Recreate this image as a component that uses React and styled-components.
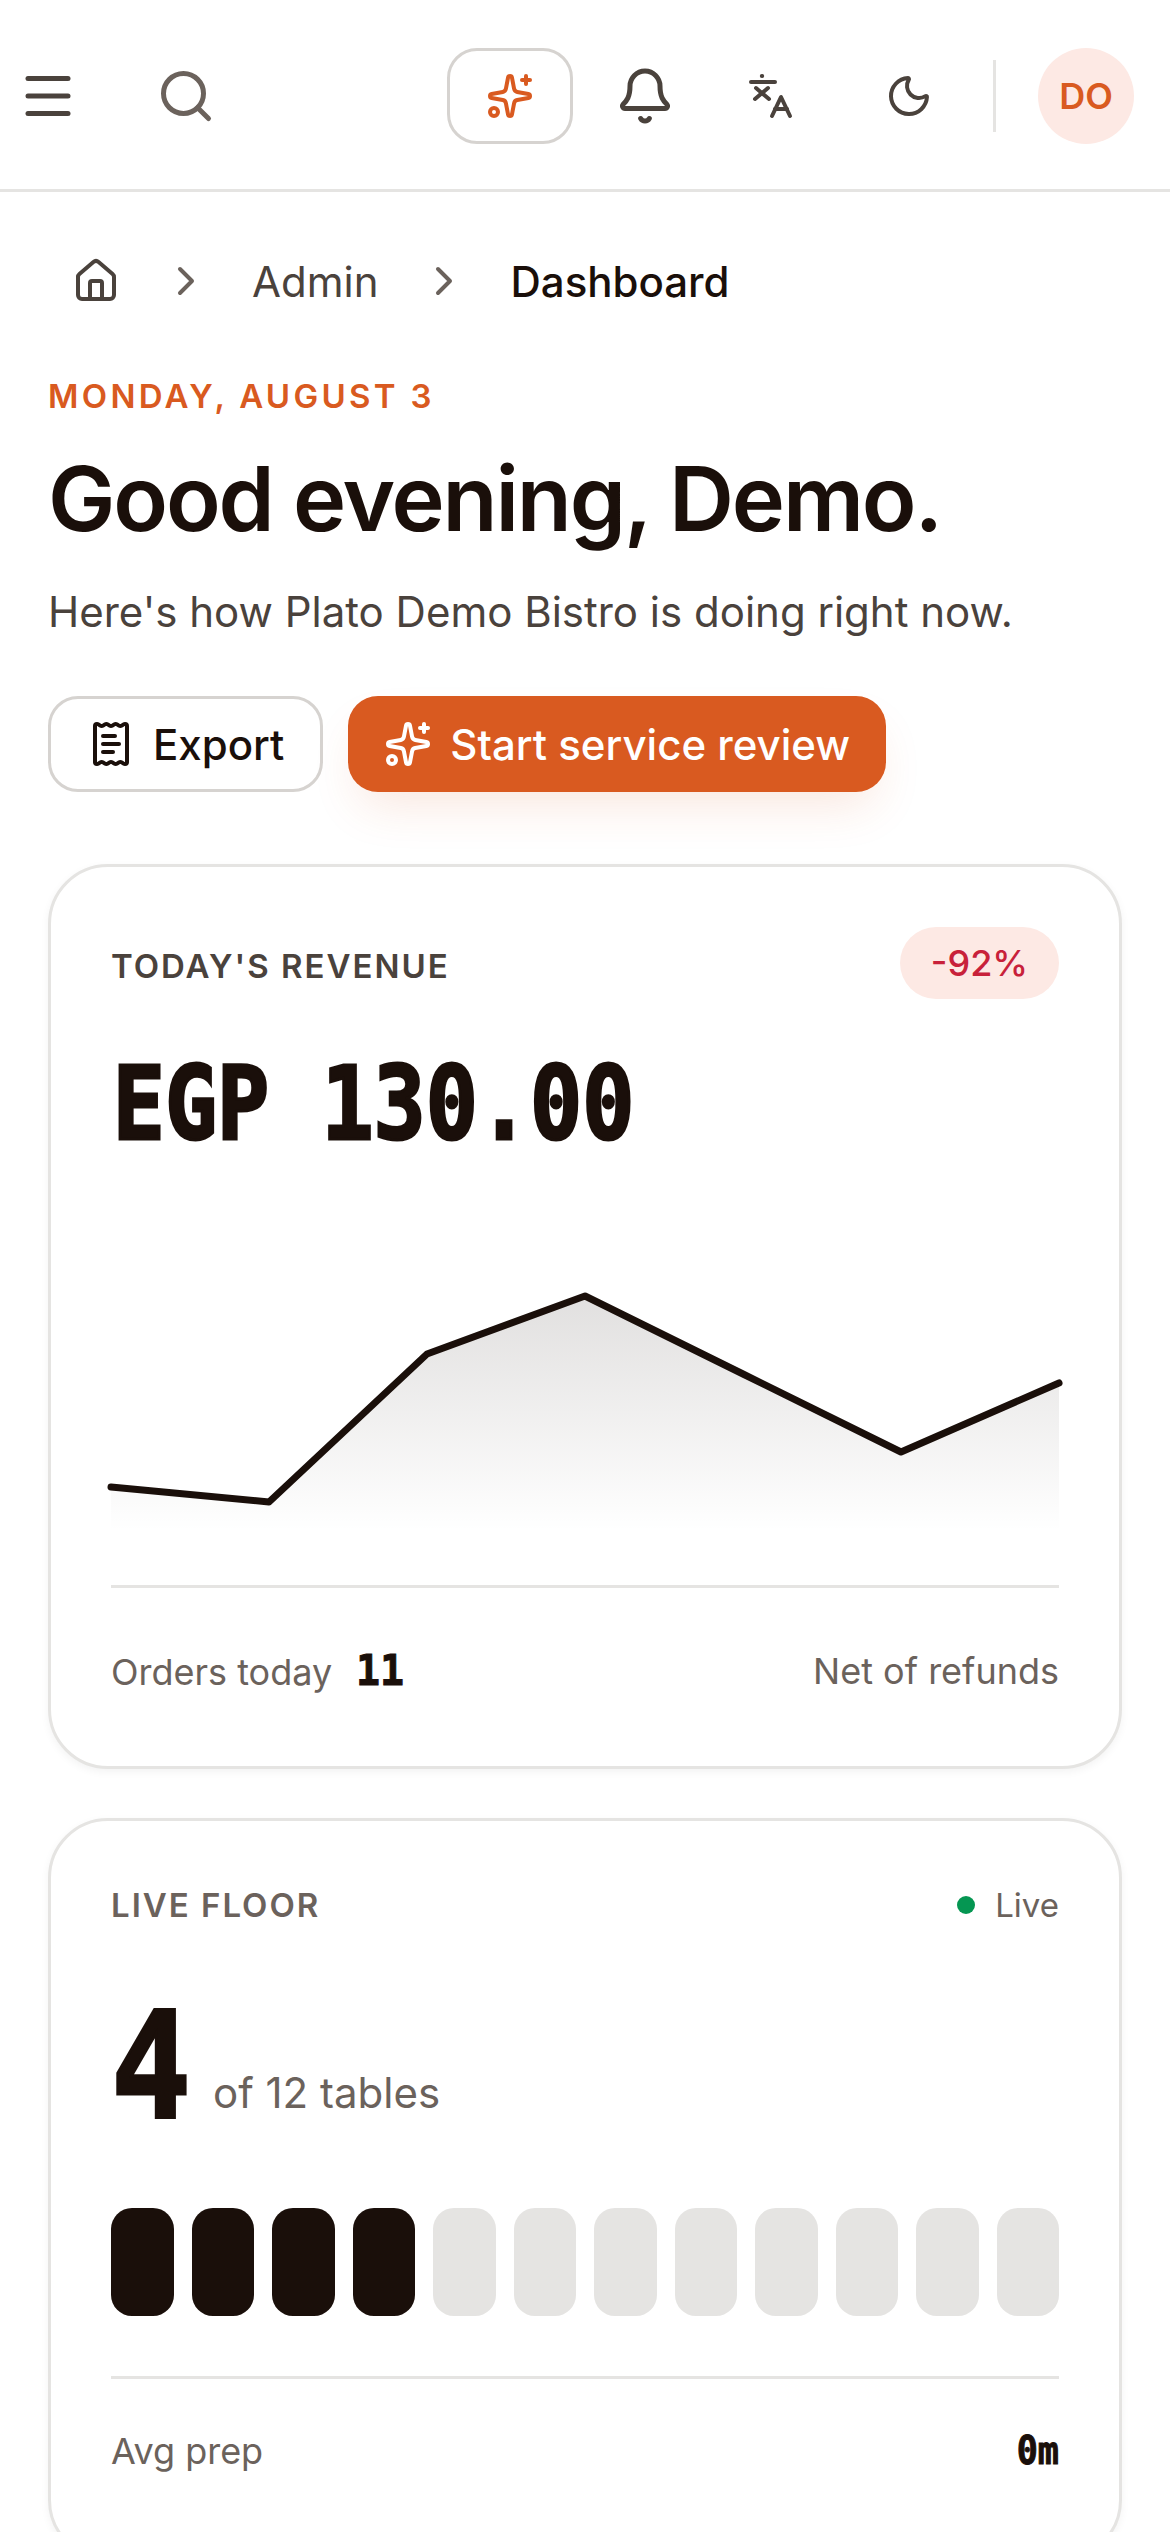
import React from "react";
import styled, { createGlobalStyle } from "styled-components";
import { Menu, Search, Sparkles, Bell, Moon, House, ChevronRight, ReceiptText } from "lucide-react";

const ink = "#1a0f0a";
const body = "#4a423c";
const muted = "#6b625c";
const line = "#e5e4e2";
const accent = "#d95a20";
const monoStack = `"DejaVu Sans Mono", "Liberation Mono", monospace`;

const GlobalStyle = createGlobalStyle`
  * { box-sizing: border-box; }
  html, body { margin: 0; padding: 0; background: #fff; }
  body { font-family: Inter, "Noto Sans", sans-serif; color: ${ink}; }
  #root { height: 2532px; overflow: hidden; }
`;

const points = [
  [111, 1485],
  [269, 1500],
  [427, 1352],
  [585, 1294],
  [743, 1372],
  [901, 1450],
  [1059, 1381],
];

function TranslateIcon() {
  return (
    <svg width="48" height="48" viewBox="0 0 24 24" fill="none" stroke={body} strokeWidth="2" strokeLinecap="round" strokeLinejoin="round">
      <path d="M2 5h12" />
      <path d="M7.4 2h.2" />
      <path d="M4.5 8l6.5 5.5" />
      <path d="M10.5 8l-6.5 5.5" />
      <path d="m21.5 22-4.5-9.5-4.5 9.5" />
      <path d="M14 18.5h6" />
    </svg>
  );
}

function RevenueChart() {
  const top = 1280;
  const h = 260;
  const pts = points.map(([x, y]) => [x - 111, y - top]);
  const d = pts.map((p) => p.join(",")).join(" ");
  return (
    <ChartBox>
      <svg width="948" height={h} viewBox={`0 0 948 ${h}`} style={{ overflow: "visible", display: "block" }}>
        <defs>
          <linearGradient id="fade" x1="0" y1="0" x2="0" y2="1">
            <stop offset="0" stopColor={ink} stopOpacity="0.13" />
            <stop offset="1" stopColor={ink} stopOpacity="0" />
          </linearGradient>
        </defs>
        <polygon points={`0,${h - 10} ${d} 948,${h - 10}`} fill="url(#fade)" />
        <polyline points={d} fill="none" stroke={ink} strokeWidth="7" strokeLinecap="round" strokeLinejoin="round" />
      </svg>
    </ChartBox>
  );
}

export default function App() {
  const tables = Array.from({ length: 12 }, (_, i) => i < 4);
  return (
    <>
      <GlobalStyle />
      <Header>
        <HeaderLeft>
          <Menu size={60} strokeWidth={2} color={body} />
          <Search size={60} strokeWidth={2} color={muted} />
        </HeaderLeft>
        <HeaderRight>
          <AiButton>
            <Sparkles size={48} strokeWidth={2} color={accent} />
          </AiButton>
          <IconButton $ml={24}>
            <Bell size={60} strokeWidth={2} color={body} />
          </IconButton>
          <IconButton $ml={30}>
            <TranslateIcon />
          </IconButton>
          <IconButton $ml={42}>
            <Moon size={48} strokeWidth={2} color={body} />
          </IconButton>
          <Separator />
          <Avatar>DO</Avatar>
        </HeaderRight>
      </Header>
      <Main>
        <Crumbs>
          <House size={48} strokeWidth={2} color={body} />
          <ChevronRight size={48} strokeWidth={2} color={muted} />
          <CrumbLink>Admin</CrumbLink>
          <ChevronRight size={48} strokeWidth={2} color={muted} />
          <CrumbCurrent>Dashboard</CrumbCurrent>
        </Crumbs>
        <DateLine>MONDAY, AUGUST 3</DateLine>
        <Title>Good evening, Demo.</Title>
        <Subtitle>Here's how Plato Demo Bistro is doing right now.</Subtitle>
        <Actions>
          <OutlineButton>
            <ReceiptText size={48} strokeWidth={2} color={ink} />
            Export
          </OutlineButton>
          <PrimaryButton>
            <Sparkles size={48} strokeWidth={2} color="#fff" />
            Start service review
          </PrimaryButton>
        </Actions>
        <Card>
          <CardHead>
            <RevenueLabel>TODAY'S REVENUE</RevenueLabel>
            <Badge>-92%</Badge>
          </CardHead>
          <Amount>EGP 130.00</Amount>
          <RevenueChart />
          <CardFoot>
            <FootLeft>
              <FootLabel>Orders today</FootLabel>
              <OrdersCount>11</OrdersCount>
            </FootLeft>
            <FootLabel>Net of refunds</FootLabel>
          </CardFoot>
        </Card>
        <FloorCard>
          <FloorHead>
            <Eyebrow>LIVE FLOOR</Eyebrow>
            <LiveTag>
              <LiveDot />
              Live
            </LiveTag>
          </FloorHead>
          <FloorCount>
            <BigNumber>4</BigNumber>
            <OfTables>of 12 tables</OfTables>
          </FloorCount>
          <Bars>
            {tables.map((busy, i) => (
              <Bar key={i} $busy={busy} />
            ))}
          </Bars>
          <FloorFoot>
            <FootLabel>Avg prep</FootLabel>
            <PrepValue>0m</PrepValue>
          </FloorFoot>
        </FloorCard>
      </Main>
    </>
  );
}

const Header = styled.header`
  height: 192px;
  border-bottom: 3px solid ${line};
  display: flex;
  align-items: center;
  justify-content: space-between;
  padding: 3px 36px 0 18px;
`;
const HeaderLeft = styled.div`
  display: flex;
  align-items: center;
  gap: 78px;
`;
const HeaderRight = styled.div`
  display: flex;
  align-items: center;
`;
const AiButton = styled.button`
  width: 126px;
  height: 96px;
  border: 3px solid #d6d3d0;
  border-radius: 30px;
  background: #fff;
  display: flex;
  align-items: center;
  justify-content: center;
  padding: 0;
`;
const IconButton = styled.button`
  width: 96px;
  height: 96px;
  margin-left: ${(p) => p.$ml}px;
  border: none;
  background: none;
  display: flex;
  align-items: center;
  justify-content: center;
  padding: 0;
`;
const Separator = styled.div`
  width: 3px;
  height: 72px;
  margin: 0 42px 0 36px;
  background: ${line};
`;
const Avatar = styled.div`
  width: 96px;
  height: 96px;
  border-radius: 50%;
  background: #fde9e4;
  color: ${accent};
  font-size: 36px;
  font-weight: 600;
  display: flex;
  align-items: center;
  justify-content: center;
`;
const Main = styled.main`
  padding: 65px 48px 0;
`;
const Crumbs = styled.nav`
  display: flex;
  align-items: center;
  gap: 42px;
  height: 48px;
  padding-left: 24px;
  font-size: 42px;
`;
const CrumbLink = styled.span`
  color: ${body};
`;
const CrumbCurrent = styled.span`
  color: ${ink};
  font-weight: 500;
`;
const DateLine = styled.div`
  margin-top: 67px;
  font-size: 33px;
  line-height: 48px;
  font-weight: 600;
  letter-spacing: 0.1em;
  color: ${accent};
`;
const Title = styled.h1`
  margin: 25px 0 0;
  font-size: 90px;
  line-height: 108px;
  font-weight: 600;
  letter-spacing: -0.024em;
  color: ${ink};
`;
const Subtitle = styled.p`
  margin: 29px 0 0;
  font-size: 42px;
  line-height: 60px;
  color: ${body};
`;
const Actions = styled.div`
  display: flex;
  gap: 25px;
  margin-top: 54px;
  margin-bottom: 72px;
`;
const OutlineButton = styled.button`
  height: 96px;
  padding: 0 36px;
  display: flex;
  align-items: center;
  gap: 18px;
  border: 3px solid #d6d3d0;
  border-radius: 30px;
  background: #fff;
  color: ${ink};
  font-family: inherit;
  font-size: 42px;
  font-weight: 500;
`;
const PrimaryButton = styled(OutlineButton)`
  border: none;
  background: ${accent};
  color: #fff;
  box-shadow: 0 24px 48px -12px rgba(217, 90, 32, 0.15);
`;
const Card = styled.section`
  padding: 60px 60px 0;
  height: 905px;
  border: 3px solid ${line};
  border-radius: 60px;
  background: #fff;
  box-shadow: 0 3px 9px rgba(26, 15, 10, 0.05);
`;
const FloorCard = styled(Card)`
  margin-top: 49px;
  height: 742px;
`;
const CardHead = styled.div`
  display: flex;
  align-items: center;
  justify-content: space-between;
`;
const Eyebrow = styled.div`
  font-size: 33px;
  font-weight: 600;
  letter-spacing: 0.06em;
  color: ${muted};
`;
const RevenueLabel = styled(Eyebrow)`
  padding-top: 5px;
  color: ${body};
`;
const Badge = styled.span`
  height: 72px;
  width: 159px;
  border-radius: 36px;
  background: #fde9e4;
  color: #c8213a;
  font-size: 36px;
  font-weight: 500;
  display: flex;
  align-items: center;
  justify-content: center;
`;
/* the original mono is narrower and heavier than anything installed */
const Amount = styled.div`
  margin-top: 45px;
  padding-left: 2px;
  font-family: ${monoStack};
  font-size: 101px;
  line-height: 120px;
  font-weight: 700;
  white-space: nowrap;
  -webkit-text-stroke: 3px ${ink};
  transform: scaleX(0.858);
  transform-origin: left center;
  color: ${ink};
`;
const ChartBox = styled.div`
  margin-top: 118px;
  height: 260px;
`;
const CardFoot = styled.div`
  margin-top: 43px;
  padding-top: 58px;
  border-top: 3px solid ${line};
  display: flex;
  align-items: center;
  justify-content: space-between;
`;
const FootLeft = styled.div`
  display: flex;
  align-items: baseline;
  gap: 24px;
`;
const FootLabel = styled.span`
  font-size: 36px;
  color: ${muted};
`;
const OrdersCount = styled.span`
  display: inline-block;
  font-family: ${monoStack};
  font-size: 42px;
  font-weight: 700;
  -webkit-text-stroke: 1px ${ink};
  transform: scaleX(0.95);
  transform-origin: left center;
  color: ${ink};
`;
const FloorHead = styled.div`
  display: flex;
  align-items: center;
  justify-content: space-between;
  height: 48px;
`;
const LiveTag = styled.div`
  display: flex;
  align-items: center;
  gap: 20px;
  font-size: 33px;
  color: ${muted};
`;
const LiveDot = styled.span`
  width: 18px;
  height: 18px;
  border-radius: 50%;
  background: #059652;
`;
const FloorCount = styled.div`
  display: flex;
  align-items: baseline;
  gap: 24px;
  margin-top: 50px;
`;
const BigNumber = styled.span`
  display: inline-block;
  width: 78px;
  font-family: ${monoStack};
  font-size: 148px;
  line-height: 156px;
  font-weight: 700;
  -webkit-text-stroke: 3px ${ink};
  transform: translateY(9px) scaleX(0.9);
  transform-origin: left center;
  color: ${ink};
`;
const OfTables = styled.span`
  font-size: 42px;
  color: ${muted};
`;
const Bars = styled.div`
  display: grid;
  grid-template-columns: repeat(12, 1fr);
  gap: 18px;
  margin-top: 73px;
`;
const Bar = styled.div`
  height: 108px;
  border-radius: 21px;
  background: ${(p) => (p.$busy ? ink : line)};
`;
const FloorFoot = styled.div`
  margin-top: 60px;
  padding-top: 49px;
  border-top: 3px solid ${line};
  display: flex;
  align-items: center;
  justify-content: space-between;
`;
const PrepValue = styled.span`
  font-family: ${monoStack};
  font-size: 39px;
  font-weight: 700;
  -webkit-text-stroke: 1px ${ink};
  transform: scaleX(0.9);
  transform-origin: right center;
  color: ${ink};
`;
